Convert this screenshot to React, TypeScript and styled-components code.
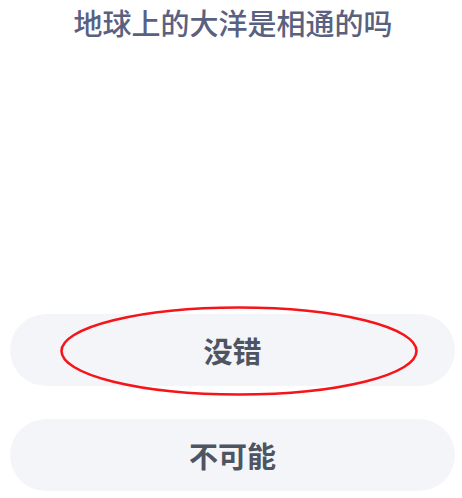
import * as React from "react";
import styled, { createGlobalStyle } from "styled-components";

const GlobalStyle = createGlobalStyle`
  html, body {
    margin: 0;
    padding: 0;
    background: #ffffff;
  }
  body {
    font-family: "Noto Sans CJK SC", "Noto Sans", sans-serif;
  }
`;

const options = [
  { label: "没错", marked: true },
  { label: "不可能", marked: false },
];

const App = () => {
  return (
    <>
      <GlobalStyle />
      <Page>
        <Question>地球上的大洋是相通的吗</Question>
        <Answers>
          {options.map((o) => (
            <Option key={o.label}>
              {o.label}
              {o.marked && (
                <Circle viewBox="0 0 358 90" aria-hidden>
                  <ellipse
                    cx="179"
                    cy="45"
                    rx="177.5"
                    ry="43.5"
                    fill="none"
                    stroke="#f5141a"
                    strokeWidth="2.6"
                  />
                </Circle>
              )}
            </Option>
          ))}
        </Answers>
      </Page>
    </>
  );
};

export default App;

const Page = styled.div`
  height: 498px;
  box-sizing: border-box;
  display: flex;
  flex-direction: column;
  justify-content: space-between;
  padding: 4px 7px 7px 10px;
`;

const Question = styled.h1`
  margin: 0;
  text-align: center;
  font-size: 29px;
  line-height: 36px;
  font-weight: 500;
  color: #5a6180;
  padding-left: 1px;
`;

const Answers = styled.div`
  display: flex;
  flex-direction: column;
  gap: 33px;
`;

const Option = styled.div`
  position: relative;
  height: 72px;
  border-radius: 36px;
  background: #f4f5f8;
  display: flex;
  align-items: center;
  justify-content: center;
  font-size: 29px;
  font-weight: 700;
  color: #4e5462;
`;

const Circle = styled.svg`
  position: absolute;
  left: 50px;
  top: -8px;
  width: 358px;
  height: 90px;
  pointer-events: none;
`;
